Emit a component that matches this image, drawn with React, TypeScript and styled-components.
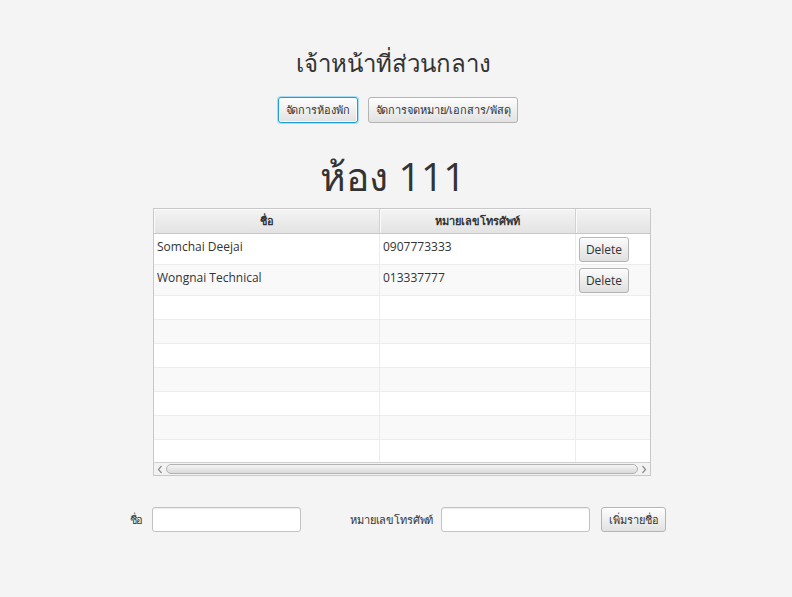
import React from "react";
import styled, { createGlobalStyle } from "styled-components";

const Global = createGlobalStyle`
  html, body { margin: 0; padding: 0; background: #f4f4f4; }
  body { font-family: "Segoe UI", "Open Sans", "Noto Sans", Tahoma, sans-serif; color: #333; }
`;

const Page = styled.div`
  width: 792px;
  height: 597px;
  display: flex;
  flex-direction: column;
  align-items: center;
  box-sizing: border-box;
  padding-top: 45px;
`;

const Title = styled.h1`
  margin: 0 6px 0 0;
  font-size: 24px;
  font-weight: normal;
  line-height: 36px;
  color: #333;
`;

const ButtonRow = styled.div`
  display: flex;
  gap: 10px;
  margin-top: 16px;
  margin-left: 4px;
`;

const FxButton = styled.button<{ $focused?: boolean }>`
  height: 26px;
  padding: 0 7px;
  font-family: inherit;
  font-size: 11px;
  letter-spacing: -0.1px;
  color: #333;
  border-radius: 3px;
  background: linear-gradient(#fdfdfd, #e2e2e2);
  border: 1px solid ${(p) => (p.$focused ? "#1a9fd6" : "#b4b4b4")};
  box-shadow: ${(p) => (p.$focused ? "0 0 0 1px #a8dcf2, inset 0 0 0 1px #fff" : "inset 0 1px 0 #fff")};
  cursor: pointer;
`;

const Room = styled.h2`
  margin: 30px 6px 0 0;
  font-size: 39px;
  font-weight: normal;
  line-height: 46px;
  color: #333;
`;

const Table = styled.div`
  margin-top: 9px;
  margin-left: 12px;
  width: 498px;
  height: 268px;
  box-sizing: border-box;
  border: 1px solid #c8c8c8;
  background: #fff;
  display: flex;
  flex-direction: column;
  overflow: hidden;
`;

const HeaderRow = styled.div`
  display: grid;
  grid-template-columns: 226px 196px 1fr;
  height: 24px;
  border-bottom: 1px solid #c8c8c8;
  background: linear-gradient(#f4f4f4, #e3e3e3);
  flex: none;
`;

const HeaderCell = styled.div`
  display: flex;
  align-items: center;
  justify-content: center;
  font-size: 11px;
  font-weight: bold;
  color: #333;
  border-right: 1px solid #d2d2d2;
  box-shadow: inset 1px 1px 0 #fbfbfb;
  &:last-child { border-right: none; }
`;

const Body = styled.div`
  flex: 1;
  display: flex;
  flex-direction: column;
  overflow: hidden;
`;

const Row = styled.div<{ $odd: boolean; $h: number }>`
  display: grid;
  grid-template-columns: 226px 196px 1fr;
  height: ${(p) => p.$h}px;
  flex: none;
  background: ${(p) => (p.$odd ? "#f9f9f9" : "#ffffff")};
  border-bottom: 1px solid #ececec;
`;

const Cell = styled.div`
  display: flex;
  align-items: flex-start;
  padding: 4px 3px 0;
  font-size: 12px;
  color: #333;
  border-right: 1px solid #ececec;
  white-space: nowrap;
  &:last-child { border-right: none; }
`;

const DeleteButton = styled.button`
  height: 25px;
  width: 50px;
  margin-top: -1px;
  padding: 0;
  font-family: inherit;
  font-size: 12px;
  color: #333;
  border-radius: 3px;
  background: linear-gradient(#fbfbfb, #e0e0e0);
  border: 1px solid #b4b4b4;
  box-shadow: inset 0 1px 0 #fff;
`;

const ScrollBar = styled.div`
  height: 12px;
  flex: none;
  display: flex;
  align-items: center;
  gap: 3px;
  padding: 0 3px;
  background: #f2f2f2;
  border-top: 1px solid #d0d0d0;
`;

const ArrowIcon = styled.svg`
  flex: none;
  width: 6px;
  height: 9px;
`;

const Thumb = styled.div`
  flex: 1;
  height: 8px;
  border: 1px solid #b2b2b2;
  border-radius: 5px;
  background: linear-gradient(#f4f4f4, #dadada);
`;

const Form = styled.div`
  margin-top: 31px;
  display: flex;
  align-items: center;
  margin-left: 4px;
`;

const Label = styled.span<{ $gap: number; $after: number }>`
  font-size: 11px;
  letter-spacing: -0.15px;
  color: #333;
  margin-left: ${(p) => p.$gap}px;
  margin-right: ${(p) => p.$after}px;
`;

const Input = styled.input`
  width: 149px;
  height: 25px;
  box-sizing: border-box;
  border: 1px solid #c2c2c2;
  border-radius: 3px;
  background: #fff;
  box-shadow: inset 0 1px 1px #ececec;
`;

const AddButton = styled(FxButton)`
  height: 25px;
  margin-left: 11px;
  padding: 0 7px;
`;

const Chevron = ({ dir }: { dir: "left" | "right" }) => (
  <ArrowIcon viewBox="0 0 6 9">
    <path
      d={dir === "left" ? "M4.5 1 L1.5 4.5 L4.5 8" : "M1.5 1 L4.5 4.5 L1.5 8"}
      fill="none"
      stroke="#8c8c8c"
      strokeWidth="1.2"
    />
  </ArrowIcon>
);

type Entry = { name: string; phone: string };
const entries: Entry[] = [
  { name: "Somchai Deejai", phone: "0907773333" },
  { name: "Wongnai Technical", phone: "013337777" },
];

export default function App() {
  const empty = Array.from({ length: 7 });
  return (
    <>
      <Global />
      <Page>
        <Title>เจ้าหน้าที่ส่วนกลาง</Title>
        <ButtonRow>
          <FxButton $focused>จัดการห้องพัก</FxButton>
          <FxButton>จัดการจดหมาย/เอกสาร/พัสดุ</FxButton>
        </ButtonRow>
        <Room>ห้อง 111</Room>
        <Table>
          <HeaderRow>
            <HeaderCell>ชื่อ</HeaderCell>
            <HeaderCell>หมายเลขโทรศัพท์</HeaderCell>
            <HeaderCell />
          </HeaderRow>
          <Body>
            {entries.map((e, i) => (
              <Row key={e.name} $odd={i % 2 === 1} $h={30}>
                <Cell>{e.name}</Cell>
                <Cell>{e.phone}</Cell>
                <Cell>
                  <DeleteButton>Delete</DeleteButton>
                </Cell>
              </Row>
            ))}
            {empty.map((_, i) => (
              <Row key={i} $odd={i % 2 === 1} $h={23}>
                <Cell />
                <Cell />
                <Cell />
              </Row>
            ))}
          </Body>
          <ScrollBar>
            <Chevron dir="left" />
            <Thumb />
            <Chevron dir="right" />
          </ScrollBar>
        </Table>
        <Form>
          <Label $gap={0} $after={9}>ชื่อ</Label>
          <Input />
          <Label $gap={49} $after={8}>หมายเลขโทรศัพท์</Label>
          <Input />
          <AddButton>เพิ่มรายชื่อ</AddButton>
        </Form>
      </Page>
    </>
  );
}
